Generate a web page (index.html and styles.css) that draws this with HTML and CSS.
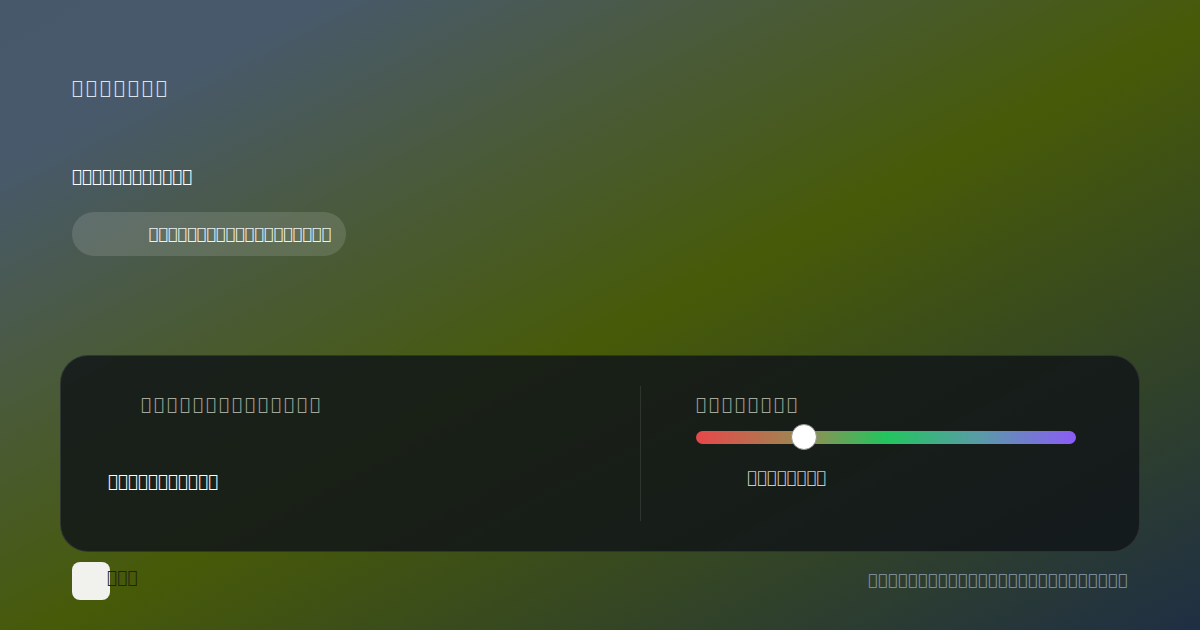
FILE: index.html
```html
<!DOCTYPE html>
<html lang="si">
<head>
  <meta charset="UTF-8" />
  <meta name="viewport" content="width=device-width, initial-scale=1.0"/>
  <title>Palette</title>
  <link rel="stylesheet" href="styles.css">
</head>
<body>
  <div class="page">
    <header class="brand">&#xE000;&#xE001;&#xE002;&#xE003;&#xE004;&#xE005;&#xE006;</header>

    <section class="hero">
      <h1 class="hero-title">&#xE010;&#xE011;&#xE012;&#xE013;&#xE014;&#xE015;&#xE016;&#xE017;&#xE018;&#xE019;&#xE01A;&#xE01B;</h1>
      <div class="pill"><span>&#xE020;&#xE021;&#xE022;&#xE023;&#xE024;&#xE025;&#xE026;&#xE027;&#xE028;&#xE029;&#xE02A;&#xE02B;&#xE02C;&#xE02D;&#xE02E;&#xE02F;&#xE030;&#xE031;&#xE032;</span></div>
    </section>

    <section class="panel">
      <div class="panel-col">
        <div class="label label-left">&#xE040;&#xE041;&#xE042;&#xE043;&#xE044;&#xE045;&#xE046;&#xE047;&#xE048;&#xE049;&#xE04A;&#xE04B;&#xE04C;&#xE04D;</div>
        <div class="value">&#xE050;&#xE051;&#xE052;&#xE053;&#xE054;&#xE055;&#xE056;&#xE057;&#xE058;&#xE059;&#xE05A;</div>
      </div>
      <div class="divider"></div>
      <div class="panel-col panel-right">
        <div class="label">&#xE060;&#xE061;&#xE062;&#xE063;&#xE064;&#xE065;&#xE066;&#xE067;</div>
        <div class="slider">
          <div class="track"></div>
          <div class="thumb"></div>
        </div>
        <div class="caption">&#xE070;&#xE071;&#xE072;&#xE073;&#xE074;&#xE075;&#xE076;&#xE077;</div>
      </div>
    </section>

    <footer class="footer">
      <div class="swatch"></div>
      <span class="swatch-name">&#xE080;&#xE081;&#xE082;</span>
      <span class="footer-note">&#xE090;&#xE091;&#xE092;&#xE093;&#xE094;&#xE095;&#xE096;&#xE097;&#xE098;&#xE099;&#xE09A;&#xE09B;&#xE09C;&#xE09D;&#xE09E;&#xE09F;&#xE0A0;&#xE0A1;&#xE0A2;&#xE0A3;&#xE0A4;&#xE0A5;&#xE0A6;&#xE0A7;&#xE0A8;&#xE0A9;</span>
    </footer>
  </div>
</body>
</html>
```

FILE: styles.css
```css
* { box-sizing: border-box; }

html, body {
  margin: 0;
  height: 100%;
}

body {
  font-family: "DejaVu Sans", sans-serif;
  font-size: 16px;
  color: #fff;
  background: linear-gradient(to bottom right, #46586a 0%, #48596a 14%, #4a5a40 30%, #475a08 52%, #1f2f44 100%);
  overflow: hidden;
}

.page {
  width: 1200px;
  height: 630px;
  padding: 78px 72px 0;
  display: flex;
  flex-direction: column;
}

.brand {
  color: #dde4e8;
  font-size: 18px;
  letter-spacing: 3.2px;
  line-height: 20px;
}

/* Hero */
.hero {
  margin-top: 68px;
}

.hero-title {
  margin: 0;
  font-size: 16.7px;
  font-weight: bold;
  line-height: 20px;
}

.pill {
  margin-top: 26px;
  width: 274px;
  height: 44px;
  border-radius: 22px;
  background: rgba(255, 255, 255, 0.13);
  display: flex;
  align-items: center;
  justify-content: flex-end;
  padding: 0 15px;
  color: #eef1f3;
  line-height: 20px;
}

/* Panel */
.panel {
  margin: 99px -12px 0;
  height: 197px;
  border-radius: 28px;
  background: rgba(18, 22, 24, 0.86);
  border: 1px solid rgba(255, 255, 255, 0.1);
  display: grid;
  grid-template-columns: 579px 1px 1fr;
  padding: 30px 0;
}

.label {
  color: #a3a89c;
  font-size: 17px;
  line-height: 20px;
  letter-spacing: 2.8px;
  margin-top: 8px;
}

.label-left {
  padding-left: 80px;
}

.value {
  margin-top: 57px;
  padding-left: 47px;
  font-size: 16.7px;
  font-weight: bold;
  line-height: 20px;
}

.divider {
  background: rgba(255, 255, 255, 0.1);
}

.panel-right {
  padding-left: 55px;
}

.slider {
  position: relative;
  width: 380px;
  height: 26px;
  margin-top: 10px;
  display: flex;
  align-items: center;
}

.track {
  width: 100%;
  height: 13px;
  border-radius: 7px;
  background: linear-gradient(to right, #e8474a 0%, #9a8a52 28%, #22c55e 50%, #5a9aa8 75%, #8b5cf6 100%);
}

.thumb {
  position: absolute;
  left: 95px;
  top: 0;
  width: 26px;
  height: 26px;
  border-radius: 50%;
  background: #fff;
  border: 1.5px solid #8f918c;
}

.caption {
  margin-top: 18px;
  padding-left: 51px;
  color: #c8ccc8;
  font-size: 16.5px;
  line-height: 20px;
}

/* Footer */
.footer {
  margin-top: 10px;
  display: flex;
  align-items: center;
}

.swatch {
  width: 38px;
  height: 38px;
  border-radius: 8px;
  background: #f1f1ee;
}

.swatch-name {
  margin-left: -3px;
  margin-top: -8px;
  color: #1e2218;
  font-size: 17px;
  line-height: 20px;
}

.footer-note {
  margin-left: auto;
  margin-top: -2px;
  color: #8a9aaa;
  font-size: 15px;
  letter-spacing: 1px;
  line-height: 20px;
}
```
